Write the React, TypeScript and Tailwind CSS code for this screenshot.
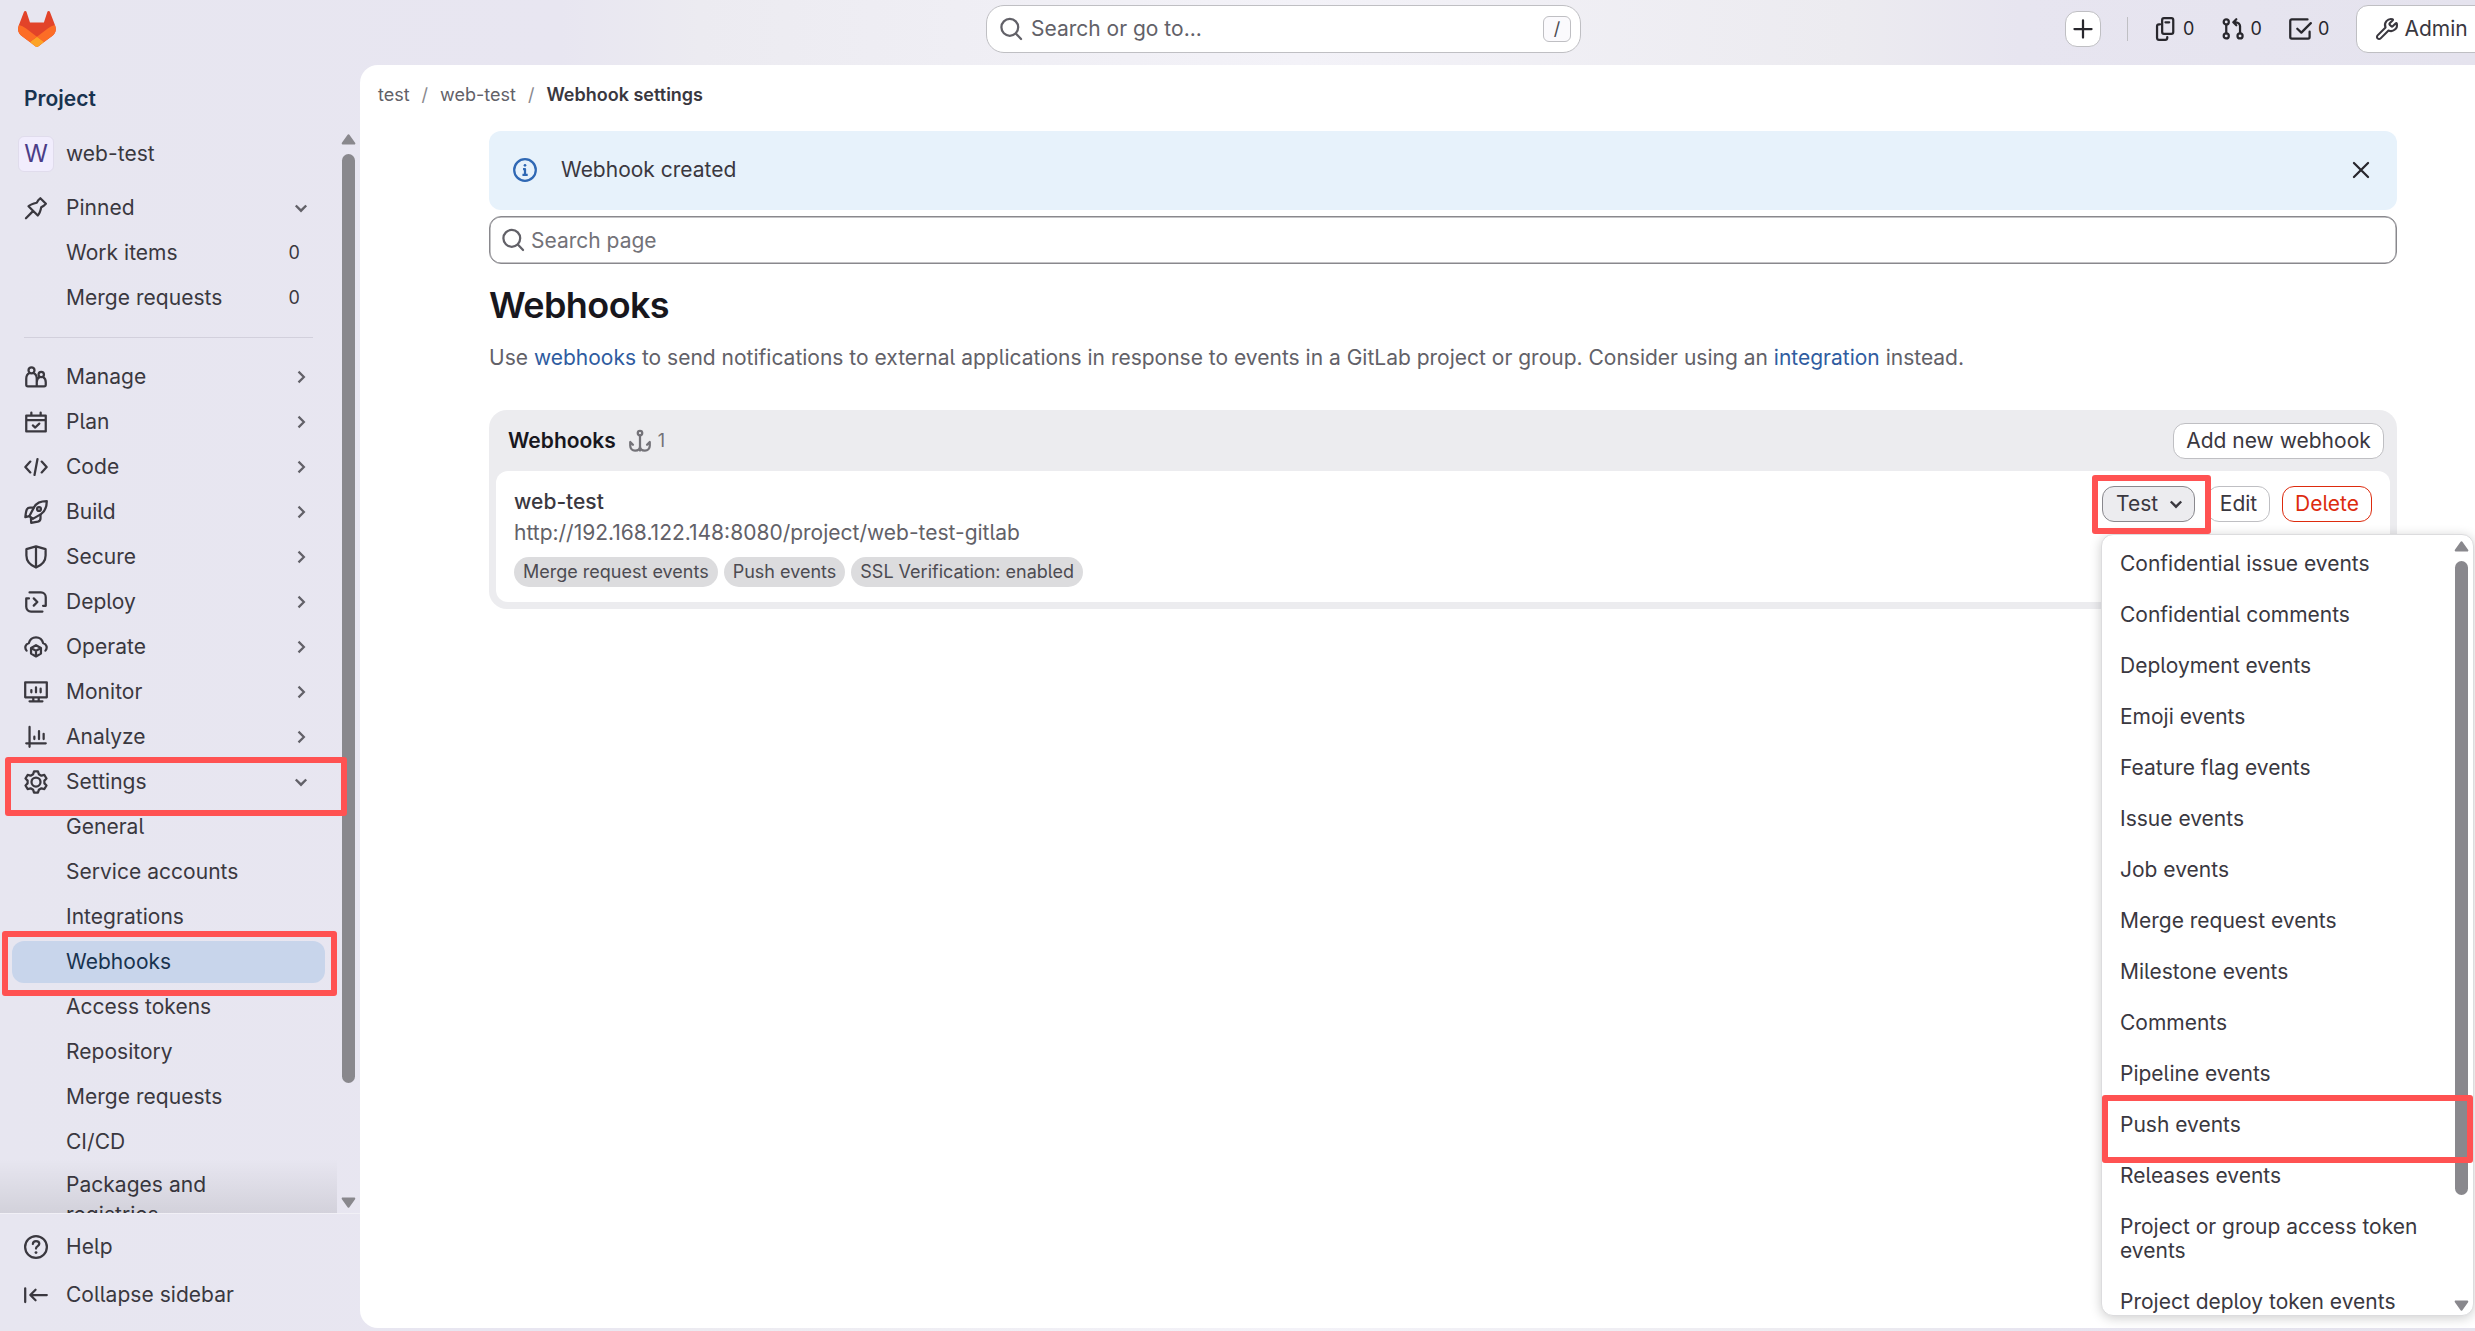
import { ReactNode } from "react";
import { Wrench } from "lucide-react";

type IconProps = { children: ReactNode; className?: string };

// 16 unit grid drawn at 24px
const Icon = ({ children, className = "" }: IconProps) => (
  <svg
    viewBox="0 0 16 16"
    fill="none"
    stroke="currentColor"
    strokeWidth="1.5"
    strokeLinecap="round"
    strokeLinejoin="round"
    className={`w-6 h-6 shrink-0 ${className}`}
  >
    {children}
  </svg>
);

const SearchIcon = ({ className = "" }: { className?: string }) => (
  <Icon className={className}>
    <circle cx="7.2" cy="6.9" r="5.6" />
    <path d="m11.2 11 3.5 3.7" />
  </Icon>
);

const ChevronDown = ({ className = "" }: { className?: string }) => (
  <svg viewBox="0 0 18 18" fill="none" stroke="currentColor" strokeWidth="2.4" className={`w-[18px] h-[18px] shrink-0 ${className}`}>
    <path d="m3.8 6.5 5.2 5.2 5.2-5.2" />
  </svg>
);

const ChevronRight = () => (
  <svg viewBox="0 0 18 18" fill="none" stroke="currentColor" strokeWidth="2.2" className="w-[18px] h-[18px] shrink-0">
    <path d="m6.5 3.6 5.4 5.4-5.4 5.4" />
  </svg>
);

const ArrowCap = ({ down = false }: { down?: boolean }) => (
  <svg viewBox="0 0 15 11" className={`w-[15px] h-[11px] shrink-0 ${down ? "rotate-180" : ""}`}>
    <path d="M7.5 1.5 13.2 9.5H1.8Z" fill="#89888d" stroke="#89888d" strokeWidth="2.2" strokeLinejoin="round" />
  </svg>
);

const Tanuki = () => (
  <svg viewBox="0 0 25 24" className="w-[38px] h-9">
    <path fill="#e24329" d="m24.507 9.5-.034-.09L21.082.562a.896.896 0 0 0-1.694.091l-2.29 7.01H7.825L5.535.653a.898.898 0 0 0-1.694-.09L.451 9.411.416 9.5a6.297 6.297 0 0 0 2.09 7.278l.012.01.03.022 5.16 3.867 2.56 1.935 1.554 1.176a1.051 1.051 0 0 0 1.268 0l1.555-1.176 2.56-1.935 5.197-3.89.014-.01A6.297 6.297 0 0 0 24.507 9.5z" />
    <path fill="#fc6d26" d="m24.507 9.5-.034-.09a11.44 11.44 0 0 0-4.56 2.051l-7.447 5.632 4.742 3.584 5.197-3.89.014-.01A6.297 6.297 0 0 0 24.507 9.5z" />
    <path fill="#fca326" d="m7.707 20.677 2.56 1.935 1.555 1.176a1.051 1.051 0 0 0 1.268 0l1.555-1.176 2.56-1.935-4.743-3.584-4.755 3.584z" />
    <path fill="#fc6d26" d="M5.01 11.461a11.43 11.43 0 0 0-4.56-2.05L.416 9.5a6.297 6.297 0 0 0 2.09 7.278l.012.01.03.022 5.16 3.867 4.745-3.584-7.444-5.632z" />
  </svg>
);

const sections: { name: string; icon: ReactNode }[] = [
  {
    name: "Manage",
    icon: (
      <>
        <circle cx="5" cy="3.5" r="2" />
        <path d="M3.7 5.3C2 6 1.5 7.6 1.5 9.2v3.9c0 .7.4 1.1 1.1 1.1h10.8c.7 0 1.1-.4 1.1-1.1v-1.6c0-1.6-.6-2.9-1.7-3.4M6.3 5.3c1.7.7 2.2 2.3 2.2 3.9v5M10.3 8.1c-1.1.5-1.8 1.8-1.8 3.4" />
        <circle cx="11.5" cy="6.3" r="1.8" />
      </>
    ),
  },
  {
    name: "Plan",
    icon: <path d="M1.5 3.7h13v10.6h-13ZM1.5 6.7h13M4.9 1.7v2M11.1 1.7v2M5.9 10.3l1.6 1.4 2.7-2.6" />,
  },
  {
    name: "Code",
    icon: <path d="M4.2 4.4.9 8l3.3 3.6M11.8 4.4 15.1 8l-3.3 3.6M9 2.7 7 13.3" />,
  },
  {
    name: "Build",
    icon: (
      <>
        <path d="M15.2.8c-4.2 0-6.900 1.2-8.400 3.900L3.600 10.700l2.300 1.900 5.400-3.200C14 7.600 15.200 4.800 15.200.8Z" />
        <path d="M6.600 5H4C2.200 5 1.400 6 .9 11.400l2.700-.6M11 9.700v2.400c0 1.400-.5 2-1.800 2.300l-4.400.8-.2-3.300" />
        <circle cx="10" cy="6" r="1.3" />
      </>
    ),
  },
  {
    name: "Secure",
    icon: <path d="M8 .9 1.600 2.800V7c0 3.700 2.700 6.500 6.400 8 3.700-1.500 6.400-4.300 6.400-8V2.800ZM8 .9V15" />,
  },
  {
    name: "Deploy",
    icon: <path d="M3.700 1.600h7.600a3.200 3.200 0 0 1 3.200 3.200v5.700h-1.800M3.300 5.600H1.500v5.600a3.200 3.200 0 0 0 3.200 3.200h7.600M6.500 5.600 8.900 8l-2.400 2.400" />,
  },
  {
    name: "Operate",
    icon: (
      <>
        <path d="M1.700 10.400C.2 8.600.9 5.900 3.200 5.500 3.700 3.200 5.700 1.500 8 1.500s4.300 1.700 4.800 4c2.300.4 3 3.100 1.500 4.900" />
        <path d="m8 6.800 3.300 1.900v3.700L8 14.300l-3.300-1.900V8.700ZM4.900 8.900 8 10.500l3.100-1.600M8 10.500v3.500" />
      </>
    ),
  },
  {
    name: "Monitor",
    icon: <path d="M.8 1.500h14.400v10H.8ZM4.900 6.700v1.500M8 4.900v3.300M11.100 5.800v2.400M6.200 11.500v2.700M9.800 11.500v2.700M3.700 14.200h8.600" />,
  },
  {
    name: "Analyze",
    icon: <path d="M3.700 1.300v13.200M1.500 12.200h13M6.900 7.800v1.600M10 4.100v5.300M13.100 5.900v3.500" />,
  },
];

const settingsItems = ["General", "Service accounts", "Integrations", "Webhooks", "Access tokens", "Repository", "Merge requests", "CI/CD"];

const events = [
  "Confidential issue events",
  "Confidential comments",
  "Deployment events",
  "Emoji events",
  "Feature flag events",
  "Issue events",
  "Job events",
  "Merge request events",
  "Milestone events",
  "Comments",
  "Pipeline events",
  "Push events",
  "Releases events",
  "Project or group access token events",
  "Project deploy token events",
];

const badges = ["Merge request events", "Push events", "SSL Verification: enabled"];

const NavRow = ({ icon, name, end }: { icon: ReactNode; name: string; end?: ReactNode }) => (
  <div className="h-[45px] shrink-0 pl-6 pr-[27px] flex items-center">
    <Icon>{icon}</Icon>
    <span className="ml-[18px] flex-1">{name}</span>
    <span className="text-[#626168]">{end}</span>
  </div>
);

const SubRow = ({ name, count, active }: { name: string; count?: number; active?: boolean }) => (
  <div className="h-[45px] shrink-0 px-3 flex items-center">
    <div className={`h-[42px] w-full rounded-xl pl-[54px] pr-[25px] flex items-center justify-between ${active ? "bg-[#c8d5eb] text-[#18334f]" : ""}`}>
      <span>{name}</span>
      {count !== undefined && <span className="text-lg">{count}</span>}
    </div>
  </div>
);

const Sidebar = () => (
  <aside className="w-[360px] shrink-0 flex flex-col tracking-[0.03px]">
    <div className="h-[66px] pl-6 pt-[2px] flex items-center font-semibold text-[#18334f]">Project</div>
    <div className="h-[1082px] flex">
      <div className="w-[337px] h-full relative overflow-hidden flex flex-col">
        <div className="h-[45px] shrink-0 mb-[9px] pl-[18px] flex items-center">
          <div className="w-9 h-9 rounded-md bg-[#f1edfd] border border-[#e0dcec] text-2xl text-[#4b3d87] flex items-center justify-center">W</div>
          <span className="ml-3">web-test</span>
        </div>
        <NavRow
          name="Pinned"
          icon={<path d="m10.900 1.500 3.700 3.700-1.400 1.300-1.700 1C11 9.800 10.500 11.700 9.200 13L3 6.800c1.300-1.300 3.200-1.800 5.500-2.300l1-1.700ZM1.300 14.800 6 10.100" />}
          end={<ChevronDown />}
        />
        <SubRow name="Work items" count={0} />
        <SubRow name="Merge requests" count={0} />
        <div className="h-[34px] shrink-0 pl-6 pr-6 pt-[17px]">
          <div className="h-px bg-[#d2d0dc]" />
        </div>
        {sections.map((section) => (
          <NavRow key={section.name} name={section.name} icon={section.icon} end={<ChevronRight />} />
        ))}
        <NavRow
          name="Settings"
          icon={
            <>
              <path d="M6.700.9h2.600l.6 1.900 1.700 1 2-.5 1.400 2.400-1.400 1.400v1.800l1.400 1.400-1.400 2.400-2-.5-1.700 1-.6 1.900H6.700l-.6-1.900-1.700-1-2 .5L1 10.300l1.400-1.400V7.100L1 5.700l1.400-2.400 2 .5 1.700-1Z" />
              <circle cx="8" cy="8" r="3" />
            </>
          }
          end={<ChevronDown />}
        />
        {settingsItems.map((item) => (
          <SubRow key={item} name={item} active={item === "Webhooks"} />
        ))}
        <div className="pl-[66px] w-[260px] shrink-0 pt-[6px] leading-[30px]">Packages and registries</div>
        <div className="absolute left-0 bottom-0 w-full h-[54px] bg-linear-to-t from-black/9 to-transparent" />
      </div>
      <div className="w-[23px] pt-[3px] pb-[5px] flex flex-col items-center pr-[1px]">
        <ArrowCap />
        <div className="mt-[9px] w-[13px] h-[929px] rounded-full bg-[#89888d]" />
        <div className="flex-1" />
        <ArrowCap down />
      </div>
    </div>
    <div className="border-t border-[#f1f0f6] pt-[10px]">
      <NavRow
        name="Help"
        icon={
          <>
            <circle cx="8" cy="8" r="7.25" />
            <path d="M5.900 6c.1-1.200.9-1.900 2.100-1.900s2.200.7 2.200 1.800c0 1.500-2.200 1.500-2.200 3.100" />
            <path d="M8 11.700v.01" strokeWidth="1.9" />
          </>
        }
      />
      <div className="pt-[3px]">
        <NavRow name="Collapse sidebar" icon={<path d="M.8 3.500v9.200M15.200 8H4.200M7.700 4.500 4.200 8l3.500 3.500" />} />
      </div>
    </div>
  </aside>
);

const Counter = ({ icon }: { icon: ReactNode }) => (
  <div className="w-[67.5px] shrink-0 flex items-center text-[#28272d]">
    <Icon>{icon}</Icon>
    <span className="ml-[6px] text-lg">0</span>
  </div>
);

const TopBar = () => (
  <header className="h-[65px] shrink-0 flex">
    <div className="w-[986px] shrink-0 pl-[18px] pt-[11px]">
      <Tanuki />
    </div>
    <div className="mt-[5px] w-[595px] h-12 shrink-0 rounded-[18px] border border-[#bfbfc3] bg-white flex items-center pl-3 pr-[9px] text-[#626168]">
      <SearchIcon />
      <span className="ml-2 flex-1">Search or go to...</span>
      <span className="w-7 h-[26px] rounded-md border border-[#bfbfc3] bg-[#fbfafd] text-lg text-[#4c4b51] flex items-center justify-center">/</span>
    </div>
    <div className="flex-1 min-w-0 flex h-[58px] items-center pl-[484px] overflow-hidden">
      <div className="w-9 h-9 shrink-0 rounded-xl border border-[#bfbfc3] bg-white text-[#28272d] flex items-center justify-center">
        <Icon>
          <path d="M8 2.300v11.400M2.300 8h11.400" />
        </Icon>
      </div>
      <div className="ml-[26px] mr-[25px] w-px h-6 shrink-0 bg-[#bfbfc3]" />
      <Counter
        icon={
          <>
            <rect x="6.1" y=".8" width="7.4" height="10.4" rx="1.2" />
            <path d="M8.300 3.500h2.500M4.700 4.900H4A1.300 1.300 0 0 0 2.700 6.200V14A1.300 1.300 0 0 0 4 15.200h4.200A1.300 1.300 0 0 0 9.500 14v-.6" />
          </>
        }
      />
      <Counter
        icon={
          <>
            <circle cx="3.5" cy="3.3" r="1.7" />
            <circle cx="3.5" cy="12.6" r="1.7" />
            <circle cx="12.7" cy="12.6" r="1.7" />
            <path d="M3.500 5v5.900M12.700 10.900V6.200a2.700 2.700 0 0 0-2.700-2.700H8.400M10.200 1.500l-2 2 2 2" />
          </>
        }
      />
      <Counter icon={<path d="M13 1.600H2.500a1 1 0 0 0-1 1v10.800a1 1 0 0 0 1 1h10.900a1 1 0 0 0 1-1V9.800M6.200 7.800l2.700 2.600 6.300-6.300" />} />
      <div className="h-12 w-[140px] shrink-0 rounded-xl border border-[#bfbfc3] bg-white pl-[18px] flex items-center text-[#3a383f]">
        <Wrench className="w-6 h-6" strokeWidth={2.1} />
        <span className="ml-[6px]">Admin</span>
      </div>
    </div>
  </header>
);

const EventsMenu = () => (
  <div className="absolute right-[-102px] top-[48px] w-[373px] h-[782px] rounded-xl bg-white border border-[#dcdcde] shadow-[0_2px_12px_rgba(0,0,0,0.2)] flex overflow-hidden text-[#3a383f]">
    <div className="flex-1 pl-[18px]">
      {events.map((event) => (
        <div key={event} className="pt-[17px] pb-[10px] w-[310px] leading-6">
          {event}
        </div>
      ))}
    </div>
    <div className="w-[23px] pt-[6px] pb-[4px] flex flex-col items-center">
      <ArrowCap />
      <div className="mt-[9px] w-[13px] h-[634px] rounded-full bg-[#89888d]" />
      <div className="flex-1" />
      <ArrowCap down />
    </div>
  </div>
);

const Card = () => (
  <section className="mt-[34px] h-[199px] rounded-[18px] bg-[#ececef] px-[7px] pb-[7px] flex flex-col">
    <div className="h-[61px] shrink-0 pl-3 pr-[6px] flex items-center">
      <h2 className="font-semibold text-[#18171d]">Webhooks</h2>
      <Icon className="ml-3 text-[#737278]">
        <circle cx="8" cy="2.7" r="1.5" />
        <path d="M8 4.400v10M1.500 8.700v2.500c0 1.900 1.300 3.200 3.200 3.200S8 13.300 8 11.500c0 1.800 1.400 2.900 3.300 2.900s3.200-1.300 3.200-3.200V8.700M1.500 8.700l1.800 1.800M14.500 8.700l-1.800 1.800" />
      </Icon>
      <span className="ml-[6px] text-lg text-[#737278]">1</span>
      <button className="ml-auto h-9 w-[211px] rounded-xl border border-[#bfbfc3] bg-white text-[#3a383f]">Add new webhook</button>
    </div>
    <div className="flex-1 rounded-xl bg-white pl-[18px] pr-[18px] flex justify-between">
      <div className="pt-[15px]">
        <p className="leading-8 font-medium text-[#3a383f]">web-test</p>
        <p className="leading-8 -mt-px text-[#626168]">http://192.168.122.148:8080/project/web-test-gitlab</p>
        <div className="mt-2 flex gap-[6px]">
          {badges.map((badge) => (
            <span key={badge} className="h-[30px] px-[9px] rounded-full bg-[#dcdcde] text-lg leading-[30px] text-[#4c4b51]">
              {badge}
            </span>
          ))}
        </div>
      </div>
      <div className="relative h-9 mt-[15px] flex gap-3">
        <button className="h-full w-[93px] rounded-xl border border-[#89888d] bg-[#ececef] text-[#3a383f] pl-[13px] flex items-center">
          Test <ChevronDown className="ml-[9px]" />
        </button>
        <button className="h-full w-[63px] rounded-xl border border-[#bfbfc3] bg-white text-[#3a383f]">Edit</button>
        <button className="h-full w-[90px] rounded-xl border border-[#dd2b0e] bg-white text-[#dd2b0e]">Delete</button>
        <EventsMenu />
      </div>
    </div>
  </section>
);

export default function App() {
  return (
    <div className="relative w-[2475px] h-[1331px] overflow-hidden flex flex-col bg-[linear-gradient(90deg,#e7e6f0_0,#e8e6f1_560px,#ecebf1_700px,#f3f2f8_1300px,#ecebf0_1850px,#e7e5f0_2020px,#e5e3ee_2475px)] text-[21px] leading-normal text-[#3a383f] font-['Inter',sans-serif] [font-feature-settings:'cv05']">
      <TopBar />
      <div className="flex-1 flex">
        <Sidebar />
        <main className="flex-1 h-[1263px] rounded-l-[18px] bg-white">
          <nav className="h-[60px] pl-[18px] flex items-center gap-3 text-lg text-[#626168]">
            <span>test</span>
            <span className="text-[#89888d]">/</span>
            <span>web-test</span>
            <span className="text-[#89888d]">/</span>
            <span className="font-semibold text-[#3a383f]">Webhook settings</span>
          </nav>
          <div className="pt-[6px] ml-[129px] w-[1908px]">
            <div className="h-[79px] rounded-xl bg-[#e7f2fb] pl-6 pr-6 pb-[2px] flex items-center">
              <Icon className="text-[#2f68b4]">
                <circle cx="8" cy="8" r="7.2" />
                <path d="M6.700 7.400H8v3.700M6.300 11.200h3.500" strokeLinecap="butt" />
                <path d="M8 4.900v.01" strokeWidth="1.8" />
              </Icon>
              <span className="ml-6 flex-1">Webhook created</span>
              <Icon className="text-[#28272d]">
                <path d="m3.300 3.300 9.400 9.400M12.700 3.300l-9.400 9.400" />
              </Icon>
            </div>
            <div className="mt-[6px] h-12 rounded-xl border border-[#89888d] shadow-[inset_0_0_0_0.5px_#89888d] pl-[11px] flex items-center text-[#737278]">
              <SearchIcon className="text-[#626168]" />
              <span className="ml-[6px] pt-[2px]">Search page</span>
            </div>
            <h1 className="mt-[19px] h-11 text-4xl leading-[44px] font-semibold tracking-[-0.36px] text-[#18171d]">
              <span className="tracking-[-0.6px]">Webhooks</span>
            </h1>
            <p className="mt-[13px] h-9 leading-9 text-[#626168]">
              Use <a className="text-[#2f5ca0]">webhooks</a> to send notifications to external applications in response to events in a GitLab project or group. Consider using an{" "}
              <a className="text-[#2f5ca0]">integration</a> instead.
            </p>
            <Card />
          </div>
        </main>
      </div>

      {/* highlight frames */}
      <div className="absolute left-[5px] top-[757px] w-[342px] h-[59px] border-[6px] border-[#ff5252] rounded-[3px]" />
      <div className="absolute left-[2px] top-[931px] w-[335px] h-[65px] border-[6px] border-[#ff5252] rounded-[3px]" />
      <div className="absolute left-[2092px] top-[475px] w-[119px] h-[59px] border-[6px] border-[#ff5252] rounded-[3px]" />
      <div className="absolute left-[2102px] top-[1095px] w-[371px] h-[68px] border-[6px] border-[#ff5252] rounded-[3px]" />
    </div>
  );
}
